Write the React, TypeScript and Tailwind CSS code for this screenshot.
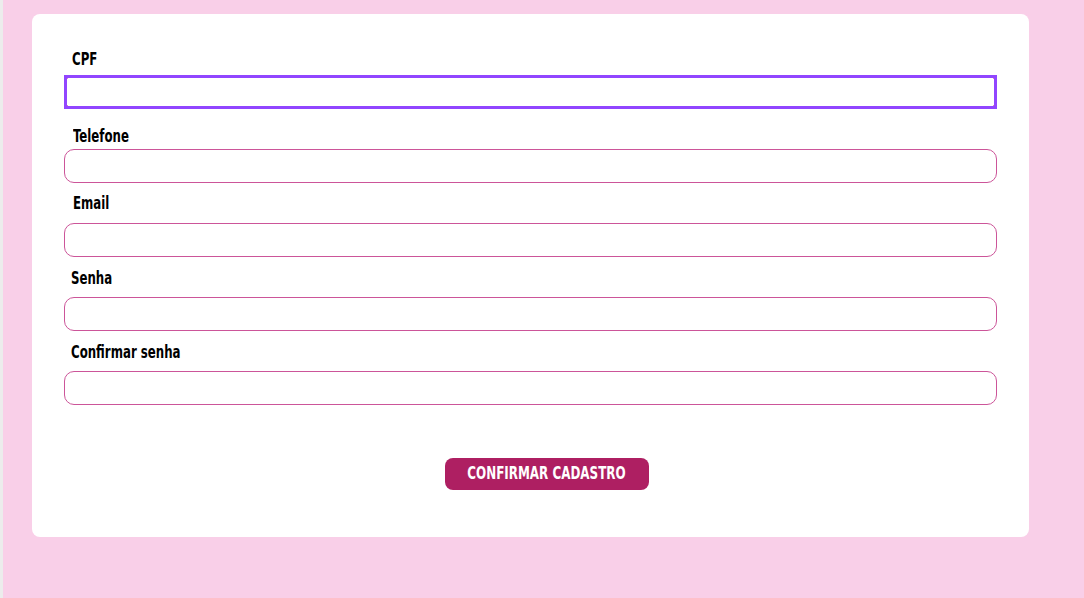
const font = {
  fontFamily: '"DejaVu Sans Condensed", "Liberation Sans", sans-serif',
};

type Field = { label: string; labelCls: string; inputCls: string; focused?: boolean; lx: string };

const fields: Field[] = [
  { label: "CPF", labelCls: "mt-0", inputCls: "mt-[6px]", focused: true, lx: "ml-2" },
  { label: "Telefone", labelCls: "mt-[17px]", inputCls: "mt-[3px]", lx: "ml-[9px]" },
  { label: "Email", labelCls: "mt-[10px]", inputCls: "mt-[10px]", lx: "ml-[9px]" },
  { label: "Senha", labelCls: "mt-[11px]", inputCls: "mt-[9px]", lx: "ml-[7px]" },
  { label: "Confirmar senha", labelCls: "mt-[11px]", inputCls: "mt-[9px]", lx: "ml-[7px]" },
];

export default function App() {
  return (
    <div className="flex min-h-[598px] w-full bg-[#f9cfe8]" style={font}>
      <div className="w-[3px] shrink-0 bg-[#ececec]" />
      <div className="ml-[29px] mt-[14px] mb-[61px] flex h-[523px] w-[997px] flex-col rounded-lg bg-white px-8 pt-[35px]">
        {fields.map((f) => (
          <div key={f.label} className="flex flex-col items-start">
            <label
              className={`${f.labelCls} ${f.lx} inline-block h-5 origin-left scale-x-[0.77] text-[17px] font-bold leading-5 text-black`}
            >
              {f.label}
            </label>
            <div className={`${f.inputCls} relative w-full`}>
              <input
                className="block h-[34px] w-full rounded-[10px] border border-[#cc5599] bg-white px-3 outline-none"
                type="text"
              />
              {f.focused && (
                <div className="pointer-events-none absolute inset-0 border-[3px] border-[#9146ff]" />
              )}
            </div>
          </div>
        ))}
        <div className="mt-[53px] flex justify-center pl-8">
          <button className="flex h-8 w-[204px] items-center justify-center rounded-lg bg-[#ae1f62] text-white">
            <span className="inline-block scale-x-[0.78] whitespace-nowrap text-[17px] font-bold uppercase">
              Confirmar cadastro
            </span>
          </button>
        </div>
      </div>
    </div>
  );
}
